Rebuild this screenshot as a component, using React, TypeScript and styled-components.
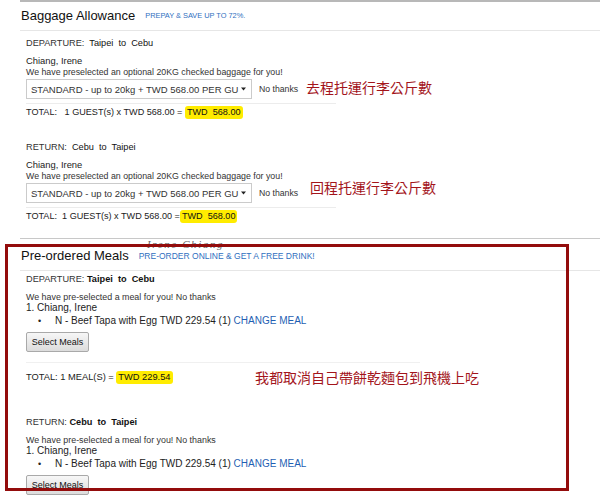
import React from "react";
import styled, { createGlobalStyle } from "styled-components";

const GlobalStyle = createGlobalStyle`
  html, body { margin: 0; padding: 0; background: #ffffff; }
  body { font-family: "Liberation Sans", Arial, sans-serif; color: #333; }
  * { box-sizing: border-box; }
`;

const Page = styled.div`
  position: relative;
  width: 600px;
  height: 497px;
  overflow: hidden;
  padding-left: 20px;
  background: #fff;
`;

const Section = styled.section<{ $top: string }>`
  border-top: ${(p) => p.$top};
`;

const Header = styled.div<{ $h: number; $pt: number }>`
  display: flex;
  align-items: center;
  gap: 10px;
  height: ${(p) => p.$h}px;
  padding-top: ${(p) => p.$pt}px;
  padding-left: 1px;
  border-bottom: 1px solid #e6e6e6;
`;

const Title = styled.h2`
  margin: 0;
  font-weight: normal;
  font-size: 13px;
  color: #111;
  line-height: 16px;
`;

const Tag = styled.span<{ $size: number }>`
  font-size: ${(p) => p.$size}px;
  color: #2f6fc0;
  line-height: 12px;
`;

const Body = styled.div<{ $pb?: number }>`
  padding-left: 6px;
  padding-bottom: ${(p) => p.$pb ?? 0}px;
`;

const Leg = styled.div<{ $mt: number }>`
  display: flow-root;
  margin-top: ${(p) => p.$mt}px;
`;

const Route = styled.div<{ $size: number; $mt: number }>`
  margin-top: ${(p) => p.$mt}px;
  font-size: ${(p) => p.$size}px;
  line-height: 14px;
  white-space: pre;
  color: #333;
`;

const City = styled.span<{ $bold?: boolean }>`
  color: #111;
  font-weight: ${(p) => (p.$bold ? "bold" : "normal")};
`;

const Name = styled.div`
  margin-top: 5px;
  font-size: 9.4px;
  line-height: 12px;
  color: #222;
`;

const Note = styled.div<{ $size: number; $lh: number; $mt?: number }>`
  margin-top: ${(p) => p.$mt ?? 0}px;
  font-size: ${(p) => p.$size}px;
  line-height: ${(p) => p.$lh}px;
  color: #333;
  white-space: nowrap;
`;

const SelectRow = styled.div`
  display: flex;
  align-items: center;
  margin-top: 1px;
  height: 20px;
`;

const SelectBox = styled.div`
  display: flex;
  align-items: center;
  justify-content: space-between;
  width: 226px;
  height: 20px;
  border: 1px solid #cbcbcb;
  background: #fff;
  padding: 0 5px 0 4px;
  font-size: 9.5px;
  color: #333;
  white-space: nowrap;
`;

const NoThanks = styled.span`
  width: 54px;
  padding-left: 7px;
  font-size: 8.7px;
  color: #333;
  white-space: nowrap;
`;

const Annotation = styled.span<{ $dx?: number; $dy?: number }>`
  margin-left: ${(p) => p.$dx ?? 0}px;
  transform: translateY(${(p) => p.$dy ?? 0}px);
  font-family: "Noto Sans CJK TC", "Noto Sans CJK SC", sans-serif;
  font-size: 14px;
  line-height: 16px;
  color: #a3141b;
  white-space: nowrap;
`;

const Divider = styled.div<{ $w: number; $mt: number; $c: string }>`
  width: ${(p) => p.$w}px;
  height: 1px;
  margin-top: ${(p) => p.$mt}px;
  background: ${(p) => p.$c};
`;

const TotalRow = styled.div<{ $mt: number }>`
  display: flex;
  align-items: center;
  margin-top: ${(p) => p.$mt}px;
  height: 14px;
`;

const TotalText = styled.span<{ $size: number; $w?: number }>`
  display: inline-flex;
  align-items: center;
  ${(p) => (p.$w ? `width: ${p.$w}px;` : "")}
  font-size: ${(p) => p.$size}px;
  white-space: pre;
  color: #222;
`;

const Highlight = styled.span`
  display: inline-block;
  background: #ffec00;
  border-radius: 3px;
  padding: 0 2px;
  line-height: 13px;
  color: #111;
`;

const Passenger = styled.div`
  font-size: 10px;
  line-height: 12px;
  color: #222;
`;

const Item = styled.div`
  display: flex;
  align-items: center;
  padding-left: 12px;
  height: 13px;
  font-size: 10px;
  color: #222;
  white-space: pre;
`;

const Bullet = styled.span`
  width: 17px;
  font-size: 9px;
`;

const Link = styled.span`
  color: #1f5fb3;
`;

const Button = styled.button`
  display: block;
  margin-top: 5px;
  width: 63px;
  height: 20px;
  padding: 0;
  border: 1px solid #a9a9a9;
  border-radius: 2px;
  background: linear-gradient(#f7f7f7, #dcdcdc);
  font-family: "Liberation Sans", Arial, sans-serif;
  font-size: 9px;
  color: #111;
`;

const RedFrame = styled.div`
  position: absolute;
  left: 5px;
  top: 244px;
  width: 564px;
  height: 247px;
  border: 3px solid #930c0c;
  pointer-events: none;
`;

const Watermark = styled.span`
  position: absolute;
  left: 147px;
  top: 238px;
  font-family: "Liberation Serif", serif;
  font-style: italic;
  font-size: 11px;
  letter-spacing: 1.6px;
  color: #666;
  pointer-events: none;
`;

const Arrow = () => (
  <svg width="5" height="4" viewBox="0 0 5 4">
    <path d="M0 0.5 L5 0.5 L2.5 3.5 Z" fill="#222" />
  </svg>
);

type BagProps = {
  label: string;
  from: string;
  to: string;
  mt: number;
  totalLead: string;
  note: string;
  dx: number;
  dy: number;
};

const BaggageLeg = ({ label, from, to, mt, totalLead, note, dx, dy }: BagProps) => (
  <Leg $mt={mt}>
    <Route $size={9.2} $mt={5}>
      {label}
      {"  "}
      <City>{`${from}  to  ${to}`}</City>
    </Route>
    <Name>Chiang, Irene</Name>
    <Note $size={8.8} $lh={11}>
      We have preselected an optional 20KG checked baggage for you!
    </Note>
    <SelectRow>
      <SelectBox>
        <span>STANDARD - up to 20kg + TWD 568.00 PER GU</span>
        <Arrow />
      </SelectBox>
      <NoThanks>No thanks</NoThanks>
      <Annotation $dx={dx} $dy={dy}>
        {note}
      </Annotation>
    </SelectRow>
    <Divider $w={310} $mt={4} $c="#ececec" />
    <TotalRow $mt={1}>
      <TotalText $size={9.1}>
        {totalLead}
        <Highlight>TWD  568.00</Highlight>
      </TotalText>
    </TotalRow>
  </Leg>
);

type MealProps = {
  label: string;
  from: string;
  to: string;
  mt: number;
  children?: React.ReactNode;
};

const MealLeg = ({ label, from, to, mt, children }: MealProps) => (
  <Leg $mt={mt}>
    <Route $size={9.2} $mt={1}>
      {label}{" "}
      <City $bold>{`${from}  to  ${to}`}</City>
    </Route>
    <Note $size={8.9} $lh={10} $mt={6}>
      We have pre-selected a meal for you! No thanks
    </Note>
    <Passenger>1. Chiang, Irene</Passenger>
    <Item>
      <Bullet>•</Bullet>
      N - Beef Tapa with Egg TWD 229.54 (1) <Link>CHANGE MEAL</Link>
    </Item>
    <Button type="button">Select Meals</Button>
    {children}
  </Leg>
);

export default function App() {
  return (
    <>
      <GlobalStyle />
      <Page>
        <Section $top="2px solid #b8b8b8">
          <Header $h={29} $pt={0}>
            <Title>Baggage Allowance</Title>
            <Tag $size={7.4}>PREPAY &amp; SAVE UP TO 72%.</Tag>
          </Header>
          <Body $pb={15}>
            <BaggageLeg
              label="DEPARTURE:"
              from="Taipei"
              to="Cebu"
              mt={0}
              totalLead={"TOTAL:   1 GUEST(s) x TWD 568.00 = "}
              note="去程托運行李公斤數"
              dx={0}
              dy={-2.5}
            />
            <BaggageLeg
              label="RETURN:"
              from="Cebu"
              to="Taipei"
              mt={16}
              totalLead={"TOTAL:  1 GUEST(s) x TWD 568.00 ="}
              note="回程托運行李公斤數"
              dx={4}
              dy={-6.5}
            />
          </Body>
        </Section>
        <Section $top="1px solid #c8c8c8">
          <Header $h={32} $pt={3}>
            <Title>Pre-ordered Meals</Title>
            <Tag $size={8.5}>PRE-ORDER ONLINE &amp; GET A FREE DRINK!</Tag>
          </Header>
          <Body>
            <MealLeg label="DEPARTURE:" from="Taipei" to="Cebu" mt={0}>
              <Divider $w={394} $mt={10} $c="#f0f0f0" />
              <TotalRow $mt={7}>
                <TotalText $size={9.3} $w={229}>
                  {"TOTAL: 1 MEAL(S) = "}
                  <Highlight>TWD 229.54</Highlight>
                </TotalText>
                <Annotation>我都取消自己帶餅乾麵包到飛機上吃</Annotation>
              </TotalRow>
            </MealLeg>
            <MealLeg label="RETURN:" from="Cebu" to="Taipei" mt={30} />
          </Body>
        </Section>
        <Watermark>Irene Chiang</Watermark>
        <RedFrame />
      </Page>
    </>
  );
}
